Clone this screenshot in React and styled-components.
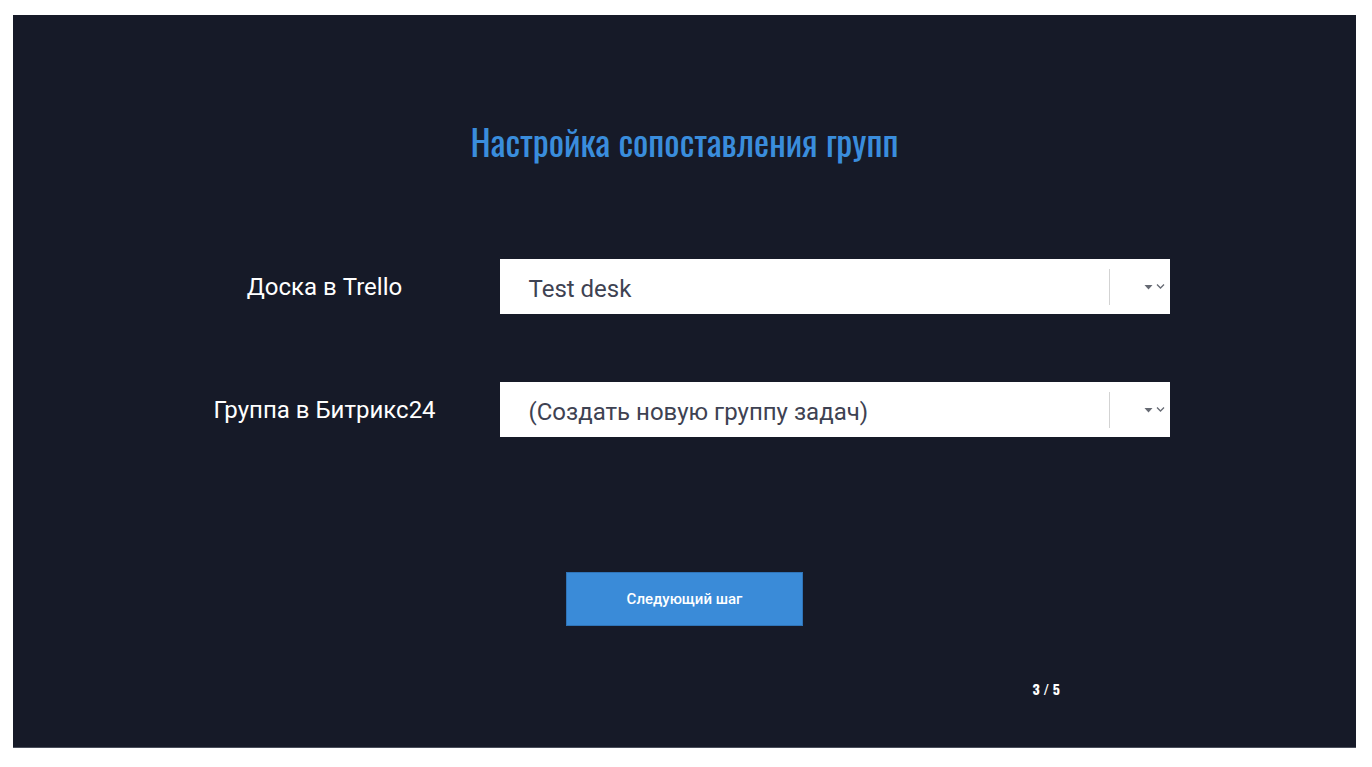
import React from 'react';
import styled, { createGlobalStyle } from 'styled-components';

const GlobalStyle = createGlobalStyle`
  html, body {
    margin: 0;
    padding: 0;
    background: #ffffff;
  }
  body {
    font-family: Roboto, "Noto Sans", sans-serif;
  }
`;

const Page = styled.div`
  padding: 15px 16px 19px 13px;
`;

const Panel = styled.div`
  height: 733px;
  background: #161a28;
  border-bottom: 1px solid #4a4f5c;
  box-sizing: border-box;
  display: flex;
  flex-direction: column;
  align-items: center;
  padding-top: 102px;
`;

const Title = styled.h1`
  margin: 0;
  font-family: "Oswald", "Roboto Condensed", "DejaVu Sans Condensed", "Liberation Sans Narrow", sans-serif;
  font-stretch: condensed;
  font-weight: 400;
  font-size: 36px;
  line-height: 48px;
  color: #3a8ddc;
`;

const Form = styled.div`
  margin-top: 94px;
  width: 1070px;
  display: flex;
  flex-direction: column;
  gap: 68px;
`;

const Row = styled.div`
  display: grid;
  grid-template-columns: 350px 670px;
  align-items: center;
`;

const Label = styled.div`
  text-align: center;
  color: #ffffff;
  font-size: 24px;
  line-height: 28px;
`;

const SelectBox = styled.div`
  height: 55px;
  background: #ffffff;
  display: flex;
  align-items: center;
  box-sizing: border-box;
`;

const SelectValue = styled.div`
  flex: 1;
  padding: 5px 0 0 29px;
  font-size: 24px;
  color: #3e4252;
  white-space: nowrap;
`;

const Divider = styled.div`
  width: 1px;
  height: 36px;
  background: #d3d3d3;
`;

const Arrows = styled.div`
  width: 60px;
  display: flex;
  align-items: center;
  justify-content: flex-end;
  gap: 3px;
  padding-right: 5px;
  box-sizing: border-box;
`;

const NextButton = styled.button`
  margin-top: 135px;
  width: 237px;
  height: 54px;
  background: #3a8bd8;
  border: 1px solid #2f74b8;
  color: #ffffff;
  font-family: Roboto, sans-serif;
  font-weight: 500;
  font-size: 15px;
  cursor: pointer;
`;

const Footer = styled.div`
  align-self: stretch;
  display: flex;
  justify-content: flex-end;
  padding-right: 296px;
  margin-top: 53px;
`;

const Counter = styled.div`
  font-family: "Oswald", "Roboto Condensed", "DejaVu Sans Condensed", "Liberation Sans Narrow", sans-serif;
  font-stretch: condensed;
  font-weight: 700;
  font-size: 14px;
  line-height: 20px;
  color: #ffffff;
`;

const ArrowIcons = () => (
  <>
    <svg width="9" height="6" viewBox="0 0 9 6">
      <path d="M0.5 1 L8.5 1 L4.5 5.5 Z" fill="#666a73" />
    </svg>
    <svg width="9" height="7" viewBox="0 0 9 7">
      <path d="M1 1.5 L4.5 5 L8 1.5" fill="none" stroke="#666a73" strokeWidth="1.3" />
    </svg>
  </>
);

const Select = ({ value }) => (
  <SelectBox>
    <SelectValue>{value}</SelectValue>
    <Divider />
    <Arrows>
      <ArrowIcons />
    </Arrows>
  </SelectBox>
);

export default function App() {
  return (
    <Page>
      <GlobalStyle />
      <Panel>
        <Title>Настройка сопоставления групп</Title>
        <Form>
          <Row>
            <Label>Доска в Trello</Label>
            <Select value="Test desk" />
          </Row>
          <Row>
            <Label>Группа в Битрикс24</Label>
            <Select value="(Создать новую группу задач)" />
          </Row>
        </Form>
        <NextButton>Следующий шаг</NextButton>
        <Footer>
          <Counter>3 / 5</Counter>
        </Footer>
      </Panel>
    </Page>
  );
}
